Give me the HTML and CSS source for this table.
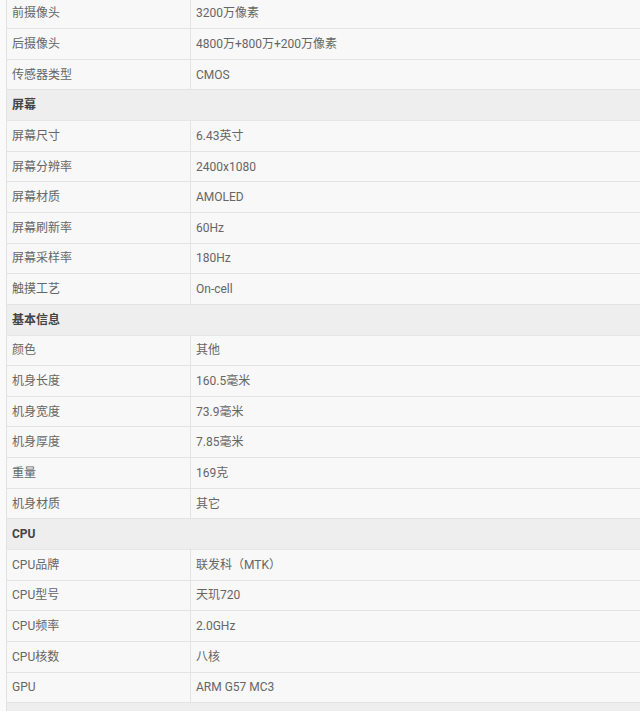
FILE: index.html
```html
<!DOCTYPE html>
<html lang="zh">
<head>
  <meta charset="UTF-8" />
  <title>参数</title>
  <link rel="stylesheet" href="styles.css">
</head>
<body>
  <table class="spec">
    <tr><td class="key">前摄像头</td><td>3200万像素</td></tr>
    <tr><td class="key">后摄像头</td><td>4800万+800万+200万像素</td></tr>
    <tr><td class="key">传感器类型</td><td>CMOS</td></tr>
    <tr class="group"><th colspan="2">屏幕</th></tr>
    <tr><td class="key">屏幕尺寸</td><td>6.43英寸</td></tr>
    <tr><td class="key">屏幕分辨率</td><td>2400x1080</td></tr>
    <tr><td class="key">屏幕材质</td><td>AMOLED</td></tr>
    <tr><td class="key">屏幕刷新率</td><td>60Hz</td></tr>
    <tr><td class="key">屏幕采样率</td><td>180Hz</td></tr>
    <tr><td class="key">触摸工艺</td><td>On-cell</td></tr>
    <tr class="group"><th colspan="2">基本信息</th></tr>
    <tr><td class="key">颜色</td><td>其他</td></tr>
    <tr><td class="key">机身长度</td><td>160.5毫米</td></tr>
    <tr><td class="key">机身宽度</td><td>73.9毫米</td></tr>
    <tr><td class="key">机身厚度</td><td>7.85毫米</td></tr>
    <tr><td class="key">重量</td><td>169克</td></tr>
    <tr><td class="key">机身材质</td><td>其它</td></tr>
    <tr class="group"><th colspan="2">CPU</th></tr>
    <tr><td class="key">CPU品牌</td><td>联发科（MTK）</td></tr>
    <tr><td class="key">CPU型号</td><td>天玑720</td></tr>
    <tr><td class="key">CPU频率</td><td>2.0GHz</td></tr>
    <tr><td class="key">CPU核数</td><td>八核</td></tr>
    <tr><td class="key">GPU</td><td>ARM G57 MC3</td></tr>
    <tr class="group"><th colspan="2">&nbsp;</th></tr>
  </table>
</body>
</html>
```

FILE: styles.css
```css
* {
  box-sizing: border-box;
  margin: 0;
  padding: 0;
}

body {
  background: #fafafa;
  font-family: Roboto, "Noto Sans CJK SC", sans-serif;
  font-size: 12px;
  color: #666;
  overflow: hidden;
  padding-left: 6px;
}

.spec {
  width: 100%;
  margin-top: -2px;
  border-collapse: collapse;
  border-left: 1px solid #e2e2e2;
  background: #f8f8f8;
}

.spec td,
.spec th {
  height: 30.65px;
  padding: 0 5px;
  border-bottom: 1px solid #e3e3e3;
  text-align: left;
  vertical-align: middle;
  line-height: 1;
}

.spec td.key {
  width: 184px;
  border-right: 1px solid #e3e3e3;
}

.spec .group th {
  background: #eeeeee;
  color: #444;
  font-weight: 700;
  border-bottom-color: #e6e6e6;
}
```
